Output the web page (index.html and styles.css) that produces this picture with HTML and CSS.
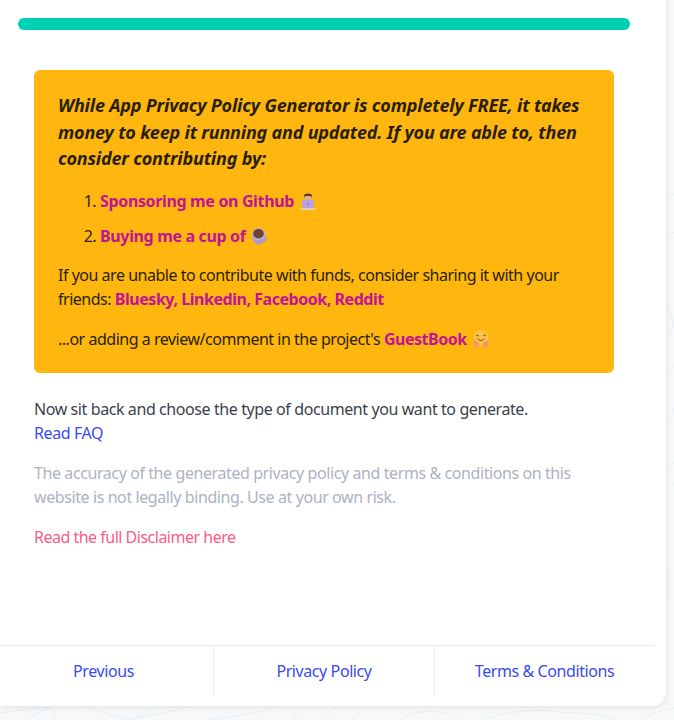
FILE: index.html
```html
<!DOCTYPE html>
<html lang="en">
<head>
  <meta charset="UTF-8">
  <title>App Privacy Policy Generator</title>
  <link rel="stylesheet" href="styles.css">
</head>

<body>
  <!-- faint map lines behind the card -->
  <svg class="topo" viewBox="0 0 674 720" fill="none" stroke="#e4f0f6" stroke-width="1">
    <path d="M0 713C20 711 32 707 50 708C58 712 54 718 50 722"/>
    <path d="M24 722C30 716 40 711 50 708"/>
    <path d="M85 706C100 712 115 716 128 720C145 716 155 708 160 704"/>
    <path d="M128 720C150 715 175 712 195 704"/>
    <path d="M198 722C225 716 260 716 278 704"/>
    <path d="M290 722C295 716 300 710 304 705M320 722C325 716 332 710 338 705M352 722C356 716 360 710 366 705"/>
    <path d="M400 722C402 714 420 710 440 712C452 714 460 718 462 722"/>
    <path d="M480 722C500 712 530 708 560 712C580 714 600 712 620 722"/>
    <path d="M640 722C645 716 655 712 674 708"/>
    <path d="M667 200L674 194M667 240C670 236 672 234 674 232"/>
    <path d="M667 335C672 330 674 326 672 318C670 312 668 310 667 306"/>
    <path d="M667 372C670 370 672 368 674 366M667 420C672 415 672 412 674 408"/>
    <path d="M667 470L674 462M667 490L674 484"/>
    <path d="M667 600C669 590 669 580 667 570"/>
  </svg>

  <div class="card">
    <div class="progress"></div>

    <div class="content">
      <div class="notice">
        <p class="notice-title">While App Privacy Policy Generator is completely FREE, it takes money to keep it running and updated. If you are able to, then consider contributing by:</p>
        <ol>
          <li>
            <a href="#">Sponsoring me on Github</a>
            <svg class="emoji" viewBox="0 0 18 18">
              <rect x="5.500" y="3" width="7" height="7" rx="2" fill="#e3ab8f"/>
              <path d="M5 6V3.500C5 .8 13 .8 13 3.500V6L12 4H6Z" fill="#5a3d2e"/>
              <rect x="3" y="8" width="12" height="9" rx=".8" fill="#b8a4dc"/>
              <rect x="1.500" y="16.500" width="15" height="1" fill="#f2ecf6"/>
              <circle cx="9" cy="12.300" r="1" fill="#8e7ab8"/>
            </svg>
          </li>
          <li>
            <a href="#">Buying me a cup of</a>
            <svg class="emoji" viewBox="0 0 18 18">
              <path d="M13.500 10.500C17 9.500 17.500 13.500 13 14" fill="none" stroke="#a795c6" stroke-width="1.500"/>
              <path d="M2.200 7C2 13 4 17.500 8.500 17.500S15.500 13 15 7Z" fill="#ad9ccb"/>
              <ellipse cx="8.500" cy="7" rx="6.500" ry="6" fill="#bcaed4"/>
              <ellipse cx="8.500" cy="6.700" rx="5.300" ry="4.800" fill="#6b4339"/>
            </svg>
          </li>
        </ol>
        <p class="share">If you are unable to contribute with funds, consider sharing it with your friends: <a href="#">Bluesky, Linkedin, Facebook, Reddit</a></p>
        <p class="share last">...or adding a review/comment in the project's <a href="#">GuestBook</a>
          <svg class="emoji" viewBox="0 0 18 18">
            <circle cx="9" cy="8" r="7.500" fill="#fbc34a"/>
            <path d="M4 6Q5.500 4 7 6M11 6Q12.500 4 14 6" fill="none" stroke="#70491f" stroke-width="1"/>
            <path d="M5.500 8.500Q9 12.500 12.500 8.500" fill="none" stroke="#70491f" stroke-width="1"/>
            <path d="M.8 10.500Q4 9.500 7.500 14L6 17.500H3Z M17.200 10.500Q14 9.500 10.500 14L12 17.500H15Z" fill="#f29a5e"/>
          </svg>
        </p>
      </div>

      <p class="intro">Now sit back and choose the type of document you want to generate.<br><a class="link" href="#">Read FAQ</a></p>
      <p class="muted">The accuracy of the generated privacy policy and terms &amp; conditions on this website is not legally binding. Use at your own risk.</p>
      <p><a class="disclaimer" href="#">Read the full Disclaimer here</a></p>
    </div>

    <div class="footer">
      <a class="footer-item prev" href="#">Previous</a>
      <a class="footer-item policy" href="#">Privacy Policy</a>
      <a class="footer-item terms" href="#">Terms &amp; Conditions</a>
    </div>
  </div>
</body>

</html>
```

FILE: styles.css
```css
* {
  margin: 0;
  padding: 0;
  box-sizing: border-box;
}

html,
body {
  height: 720px;
  overflow: hidden;
}

body {
  background: #f7f8f9;
  font-family: "Noto Sans", "Open Sans", sans-serif;
  font-size: 16px;
  line-height: 24px;
  letter-spacing: -.41px;
  color: #3a3f4c;
}

.topo {
  position: absolute;
  top: 0;
  left: 0;
  width: 674px;
  height: 720px;
  z-index: -1;
}

.card {
  width: 666px;
  height: 706px;
  background: #fff;
  border-bottom-right-radius: 14px;
  box-shadow: 0 1px 6px rgba(0, 0, 0, .1);
  display: flex;
  flex-direction: column;
}

.progress {
  width: 612px;
  height: 12px;
  margin: 18px 0 0 18px;
  border-radius: 6px;
  background: #00d1b2;
}

.content {
  flex: 1;
  padding: 40px 52px 0 34px;
}

.content p {
  margin-bottom: 16px;
}

.notice {
  background: #ffb70f;
  color: #2a1f06;
  border-radius: 6px;
  padding: 22px 24px;
  margin-bottom: 24px;
}

.notice .notice-title {
  font-size: 18px;
  font-weight: 700;
  font-style: italic;
  line-height: 26.6px;
  letter-spacing: -.2px;
  margin-bottom: 17px;
}

.notice .last {
  margin-bottom: 0;
}

.notice ol {
  padding-left: 42px;
  margin-bottom: 15px;
}

.notice li {
  margin-bottom: 11px;
}

.notice a {
  color: #c21296;
  font-weight: 700;
  text-decoration: none;
  letter-spacing: -.35px;
}

.notice .share {
  letter-spacing: -.48px;
}

.notice .share a {
  letter-spacing: -.46px;
}

.emoji {
  width: 18px;
  height: 18px;
  margin-left: 1px;
  vertical-align: -3px;
}

.link {
  color: #3a49f0;
  text-decoration: none;
}

.muted {
  color: #adb3c0;
}

.disclaimer {
  color: #f95c85;
  text-decoration: none;
  letter-spacing: -.5px;
}

.footer {
  width: 654px;
  height: 50px;
  margin-bottom: 11px;
  border-top: 1px solid #e8e9ec;
  display: grid;
  grid-template-columns: 214px 221px 219px;
}

.footer-item {
  height: 49px;
  line-height: 51px;
  text-align: center;
  color: #3a49f0;
  text-decoration: none;
  border-right: 1px solid #e8e9ec;
}

.footer-item.prev {
  padding-right: 6px;
}

.footer-item.terms {
  border-right: 0;
}
```
